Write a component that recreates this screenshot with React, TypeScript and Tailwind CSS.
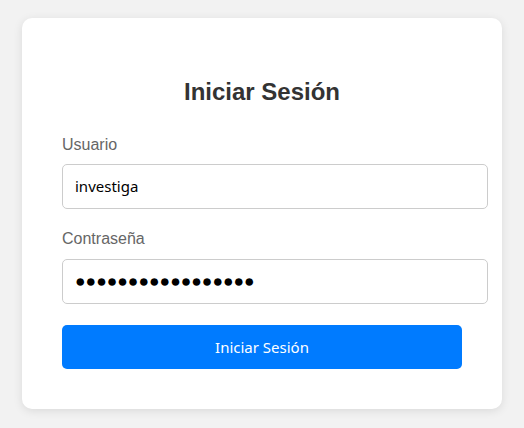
import { useState } from 'react'

export default function App() {
  const [usuario, setUsuario] = useState('investiga')
  // mostrado como puntos, igual que el campo de la captura
  const [password, setPassword] = useState('●●●●●●●●●●●●●●●●●')

  return (
    <div className="min-h-screen bg-[#f2f2f2] flex items-center justify-center font-['Liberation_Sans',Arial,sans-serif]">
      <div className="w-[480px] bg-white rounded-[10px] shadow-[0_2px_10px_rgba(0,0,0,0.1)] px-10 pt-[60px] pb-10 -mt-px">
        <h2 className="text-center text-[24px] leading-[28px] font-bold text-[#333] mb-[30px]">Iniciar Sesión</h2>

        <form onSubmit={(e) => e.preventDefault()}>
          {/* Usuario */}
          <div className="mb-[21px]">
            <label className="block text-[16px] leading-[18px] text-[#666] mb-[10px]">Usuario</label>
            <input
              type="text"
              value={usuario}
              onChange={(e) => setUsuario(e.target.value)}
              className="box-content w-full px-3 py-3 h-[19px] border border-[#ccc] rounded-[5px] text-[15px] leading-[19px] text-black font-['Noto_Sans',sans-serif] outline-none"
            />
          </div>

          {/* Contraseña */}
          <div className="mb-[21px]">
            <label className="block text-[16px] leading-[18px] text-[#666] mb-[11px]">Contraseña</label>
            <input
              type="text"
              value={password}
              onChange={(e) => setPassword(e.target.value)}
              className="box-content w-full px-3 py-3 h-[19px] border border-[#ccc] rounded-[5px] text-[17.5px] leading-[19px] text-black font-['Liberation_Sans',sans-serif] outline-none"
            />
          </div>

          <button
            type="submit"
            className="w-full h-[44px] bg-[#007bff] text-white rounded-[5px] text-[15px] leading-[20px] font-['Noto_Sans',sans-serif]"
          >
            Iniciar Sesión
          </button>
        </form>
      </div>
    </div>
  )
}
